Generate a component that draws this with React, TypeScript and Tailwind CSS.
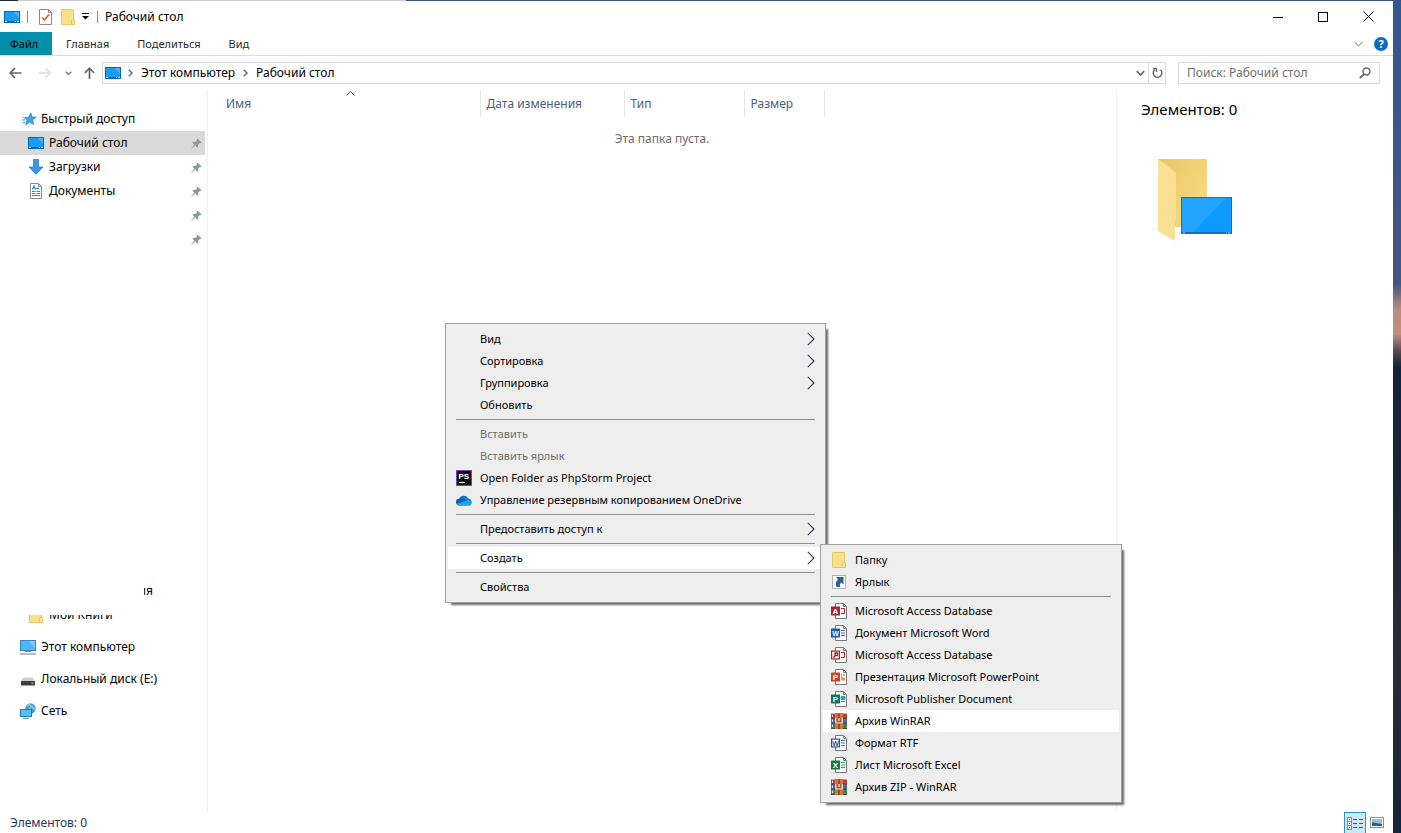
import type { ReactNode } from "react";
import clsx from "clsx";

type MenuEntry =
  | { type: "separator" }
  | {
      type: "item";
      label: string;
      icon?: ReactNode;
      submenu?: boolean;
      disabled?: boolean;
      active?: boolean;
    };

const DesktopIcon = () => (
  <svg width="16" height="12" viewBox="0 0 16 12" className="shrink-0" shapeRendering="crispEdges">
    <rect width="16" height="12" fill="#0b67ad" />
    <rect x="1" y="1" width="14" height="9" fill="#1a9df5" />
    <path d="M9 1h6v5z" fill="#45b4fb" />
    <path d="M1 10h2v1H1zM11 10h1v1h-1zM13 10h2v1h-2z" fill="#cfeaff" />
  </svg>
);

const FolderIcon = ({ className }: { className?: string }) => (
  <svg width="14" height="16" viewBox="0 0 14 16" className={clsx("shrink-0", className)}>
    <path d="M.5.5h12v10l1 .5v4.500H.5z" fill="#fbe08b" stroke="#e8c664" />
    <path d="M10.500 15.500v-4l1.500-1.500 1.500 1v4.500z" fill="#ffe9a3" stroke="#e3bd4f" strokeWidth=".8" />
  </svg>
);

const PropertiesIcon = () => (
  <svg width="13" height="16" viewBox="0 0 13 16" className="shrink-0" fill="none">
    <path d="M.5.5h9l3 3v12H.5z" fill="#fff" stroke="#8b8b8b" />
    <path d="M9.500.5v3h3" stroke="#8b8b8b" />
    <path d="M3 8.500 5.500 11 10 5.500" stroke="#dc6236" strokeWidth="1.700" />
  </svg>
);

const StarIcon = () => (
  <svg width="15" height="14" viewBox="0 0 15 14" className="shrink-0">
    <path
      d="M8.800.8l1.100 4 4.300.4-3.500 2.600.9 4.700-3.900-2.400-4.200 2.700L5 8.400 2.600 6l3.900-.8z"
      fill="#35a7ef"
      stroke="#1e7fc4"
      strokeWidth=".7"
    />
    <path d="M1 5.500h3M0 8h3M1 10.500h2" stroke="#4bafe9" />
  </svg>
);

const DownloadIcon = () => (
  <svg width="16" height="16" viewBox="0 0 16 16" className="shrink-0">
    <path d="M5.500.5h5v7.500h4.500L8 15.400 1 8h4.500z" fill="#3f96e0" stroke="#2d7dc6" strokeWidth=".8" />
  </svg>
);

const DocumentIcon = () => (
  <svg width="12" height="16" viewBox="0 0 12 16" className="shrink-0" fill="none">
    <path d="M.5.5h8l3 3v12H.5z" fill="#fff" stroke="#8a8a8a" />
    <path d="M8.500.5v3h3" stroke="#8a8a8a" />
    <path
      d="M2.500 6.500 4 3l1.500 3.500M6 5.500h3M2 8.500h3.500M6.500 8.500H10M2 10.500h3.500M6.500 10.500H10M2 12.500h8"
      stroke="#2f86c8"
      strokeWidth="1.200"
    />
  </svg>
);

const ComputerIcon = () => (
  <svg width="16" height="15" viewBox="0 0 16 15" className="shrink-0">
    <rect x=".5" y=".5" width="15" height="10" fill="#4cb8f6" stroke="#3a87b5" />
    <path d="M9 1h6v7z" fill="#77cbfa" />
    <path d="M5 11.500h6" stroke="#5f8ea8" />
    <path d="M0 14h16" stroke="#8eacbf" strokeWidth="1.500" />
  </svg>
);

const DriveIcon = () => (
  <svg width="14" height="9" viewBox="0 0 14 9" className="mt-1 shrink-0">
    <path d="M2.500.5h9L14 4H0z" fill="#cfcfcf" />
    <rect y="4" width="14" height="4.500" rx=".6" fill="#3e3e3e" />
    <rect x="10.500" y="5.500" width="2" height="1.300" fill="#55e07c" />
  </svg>
);

const NetworkIcon = () => (
  <svg width="16" height="16" viewBox="0 0 16 16" className="shrink-0">
    <circle cx="10.500" cy="5.500" r="5.200" fill="#4b9fcb" />
    <path d="M7 3c2-2 4-1 4 .5S9 5 9.500 7M13 3c-1 1 0 3 2 3" stroke="#9bd0e8" strokeWidth="1.300" fill="none" />
    <rect x=".5" y="6.500" width="11" height="7" fill="#58bdf8" stroke="#2a79ad" />
    <path d="M3 15.300h6" stroke="#3c87b4" />
  </svg>
);

const PinIcon = () => (
  <svg width="11" height="11" viewBox="0 0 11 11" className="shrink-0">
    <path d="M6.500.5 10.500 4.500 9.300 5.200 8.800 5 7 6.800 7 8.900 6.200 9.500 4 7.300.8 10.500.3 10.200 3.300 6.600 1.400 4.700 2.100 4 4.200 4 6 2.200 5.800 1.400z" fill="#8c969e" />
  </svg>
);

const ChevronRight = () => (
  <svg width="8" height="14" viewBox="0 0 8 14" fill="none" className="shrink-0">
    <path d="M.8.8 7 7 .8 13.200" stroke="#33334a" strokeWidth="1.100" />
  </svg>
);

const CrumbChevron = () => (
  <svg width="5" height="8" viewBox="0 0 5 8" fill="none" className="shrink-0">
    <path d="M.8.8 4 4 .8 7.200" stroke="#666" strokeWidth="1.400" />
  </svg>
);

const PhpStormIcon = () => (
  <svg width="16" height="16" viewBox="0 0 16 16">
    <rect width="16" height="16" fill="#7a3fb0" />
    <rect x="1" y="1" width="14" height="14" fill="#120c1a" />
    <text x="2.500" y="8.500" fontSize="8" fontWeight="700" fontFamily="Liberation Sans, sans-serif" fill="#fff">
      PS
    </text>
    <path d="M3 12.500h6" stroke="#fff" strokeWidth="1.200" />
  </svg>
);

const OneDriveIcon = () => (
  <svg width="16" height="11" viewBox="0 0 16 11">
    <path d="M3.500 10.500A3.400 3.400 0 0 1 3.200 3.600 5 5 0 0 1 12 3.200L13 7z" fill="#0c64b6" />
    <path d="M5 3.600c2-.3 3.500.8 5 1.800L13 8 15.500 6.200A3.600 3.600 0 0 0 12 3.400 5 5 0 0 0 5 3.600z" fill="#1583d8" />
    <path d="M.9 8.800A3.500 3.500 0 0 0 3.700 10.800H12.600A3.300 3.300 0 0 0 15.500 6L12.500 4.800 7.500 6.500z" fill="#28a0e8" />
  </svg>
);

const ShortcutIcon = () => (
  <svg width="14" height="14" viewBox="0 0 14 14">
    <rect x=".5" y=".5" width="13" height="13" fill="#fff" stroke="#a9b3bd" />
    <path d="M4 2h7.500v7.500L9.500 7.500c-1.800 1-2 2.200-1.200 4.500H4.500C3 9 3.800 6.500 6 4.500z" fill="#2f5b97" />
  </svg>
);

const OfficeIcon = ({
  letter,
  color,
  outlined,
  children,
}: {
  letter?: string;
  color: string;
  outlined?: boolean;
  children?: ReactNode;
}) => (
  <svg width="16" height="16" viewBox="0 0 16 16" fill="none">
    <path d="M4.500.5h8l3 3v12h-11z" fill="#fff" stroke="#777" />
    <path d="M12.500.5v3h3" stroke="#777" />
    {children}
    <rect
      x={outlined ? 0.6 : 0}
      y={outlined ? 4.1 : 3.5}
      width={outlined ? 7.8 : 9}
      height={outlined ? 7.8 : 9}
      fill={outlined ? "#fff" : color}
      stroke={outlined ? color : "none"}
      strokeWidth="1.200"
    />
    {letter ? (
      <text
        x="4.500"
        y="10.700"
        fontSize={letter === "W" ? 7 : 8}
        fontWeight="700"
        textAnchor="middle"
        fontFamily="Liberation Sans, sans-serif"
        fill={outlined ? color : "#fff"}
      >
        {letter}
      </text>
    ) : (
      <path d="M2.300 10.500 4.300 8.500M4 6h2.500v2.500H4z" stroke={color} strokeWidth="1.400" />
    )}
  </svg>
);

const WinRarIcon = () => (
  <svg width="16" height="16" viewBox="0 0 16 16">
    <rect y=".5" width="16" height="5" fill="#c23a42" />
    <rect y="5.500" width="16" height="5" fill="#5560b0" />
    <rect y="10.500" width="16" height="5" fill="#2f8a44" />
    <path d="M0 5.300h16M0 10.300h16M0 15.500h16" stroke="#3b2340" strokeWidth=".8" />
    <path d="M1.500 1.500v2.500M1.500 6.500V9M1.500 11.500V14" stroke="#f3d7dc" />
    <path d="M4 0h3.500v16H4zM8.500 0H12v16H8.500z" fill="#d0792f" />
    <path d="M7.500 0h1v16h-1z" fill="#6e3a1c" />
    <rect x="4" y="5" width="8" height="6" fill="#b3541f" />
    <path d="M4.800 5v5h6.400V5M8 5v3" stroke="#f6efe6" strokeWidth="1.200" fill="none" />
  </svg>
);

const TableLines = ({ color }: { color: string }) => (
  <path d="M10 5.500h3.500v5H10" stroke={color} />
);

const TextLines = ({ color }: { color: string }) => (
  <path d="M10 5.500h4M10 8h4M10 10.500h4" stroke={color} strokeWidth="1.200" />
);

const contextMenu: MenuEntry[] = [
  { type: "item", label: "Вид", submenu: true },
  { type: "item", label: "Сортировка", submenu: true },
  { type: "item", label: "Группировка", submenu: true },
  { type: "item", label: "Обновить" },
  { type: "separator" },
  { type: "item", label: "Вставить", disabled: true },
  { type: "item", label: "Вставить ярлык", disabled: true },
  { type: "item", label: "Open Folder as PhpStorm Project", icon: <PhpStormIcon /> },
  { type: "item", label: "Управление резервным копированием OneDrive", icon: <OneDriveIcon /> },
  { type: "separator" },
  { type: "item", label: "Предоставить доступ к", submenu: true },
  { type: "separator" },
  { type: "item", label: "Создать", submenu: true, active: true },
  { type: "separator" },
  { type: "item", label: "Свойства" },
];

const createMenu: MenuEntry[] = [
  { type: "item", label: "Папку", icon: <FolderIcon /> },
  { type: "item", label: "Ярлык", icon: <ShortcutIcon /> },
  { type: "separator" },
  {
    type: "item",
    label: "Microsoft Access Database",
    icon: <OfficeIcon letter="A" color="#a4262f"><TableLines color="#a4262f" /></OfficeIcon>,
  },
  {
    type: "item",
    label: "Документ Microsoft Word",
    icon: <OfficeIcon letter="W" color="#185abd"><TextLines color="#2b7cd3" /></OfficeIcon>,
  },
  {
    type: "item",
    label: "Microsoft Access Database",
    icon: <OfficeIcon outlined color="#a4262f"><TableLines color="#a4262f" /></OfficeIcon>,
  },
  {
    type: "item",
    label: "Презентация Microsoft PowerPoint",
    icon: (
      <OfficeIcon letter="P" color="#c8472b">
        <path d="M10 4.500h1v4h3v3h-4zM12 4.500a2.500 2.500 0 0 1 2 2.500h-2z" fill="#e8906f" />
      </OfficeIcon>
    ),
  },
  {
    type: "item",
    label: "Microsoft Publisher Document",
    icon: (
      <OfficeIcon letter="P" color="#077568">
        <path d="M10 5.500h4v3h-4zM10 10.500h4" fill="#2ba6a8" stroke="#2ba6a8" />
      </OfficeIcon>
    ),
  },
  { type: "item", label: "Архив WinRAR", icon: <WinRarIcon />, active: true },
  {
    type: "item",
    label: "Формат RTF",
    icon: <OfficeIcon outlined letter="W" color="#2b579a"><TextLines color="#2b7cd3" /></OfficeIcon>,
  },
  {
    type: "item",
    label: "Лист Microsoft Excel",
    icon: <OfficeIcon letter="X" color="#107c41"><TextLines color="#21a366" /></OfficeIcon>,
  },
  { type: "item", label: "Архив ZIP - WinRAR", icon: <WinRarIcon /> },
];

const quickAccess = [
  { label: "Рабочий стол", icon: <DesktopIcon />, selected: true },
  { label: "Загрузки", icon: <DownloadIcon /> },
  { label: "Документы", icon: <DocumentIcon /> },
  { label: "" },
  { label: "" },
];

const places = [
  { label: "Этот компьютер", icon: <ComputerIcon /> },
  { label: "Локальный диск (E:)", icon: <DriveIcon /> },
  { label: "Сеть", icon: <NetworkIcon /> },
];

const Menu = ({ entries, label, className }: { entries: MenuEntry[]; label: string; className: string }) => (
  <ul
    role="menu"
    aria-label={label}
    className={clsx(
      "absolute border border-[#a0a0a0] bg-[#eeeeee] px-[2px] py-1 text-[11px] shadow-[4px_4px_2px_-2px_rgba(0,0,0,0.6)]",
      className
    )}
  >
    {entries.map((entry, i) =>
      entry.type === "separator" ? (
        <li key={i} role="separator" className="flex h-[7px] items-center px-2">
          <span className="h-px w-full bg-[#919191]" />
        </li>
      ) : (
        <li key={i} role="none">
          <button
            role="menuitem"
            disabled={entry.disabled}
            className={clsx(
              "flex h-[22px] w-full items-center px-2 text-left",
              entry.active && "bg-white",
              entry.disabled ? "text-[#6d6d6d]" : "text-black"
            )}
          >
            <span className="flex w-6 shrink-0">
              <span className="flex w-4 justify-center">{entry.icon}</span>
            </span>
            <span className="flex-1 whitespace-nowrap">{entry.label}</span>
            {entry.submenu && <ChevronRight />}
          </button>
        </li>
      )
    )}
  </ul>
);

const TitleBar = () => (
  <header className="flex h-[31px] items-center pl-1">
    <DesktopIcon />
    <span className="ml-[7px] h-3 w-px bg-[#8c8c8c]" />
    <button aria-label="Свойства" className="ml-[11px]">
      <PropertiesIcon />
    </button>
    <button aria-label="Новая папка" className="ml-[9px]">
      <FolderIcon />
    </button>
    <button aria-label="Настройка панели быстрого доступа" className="ml-[7px]">
      <svg width="7" height="7" viewBox="0 0 7 7">
        <path d="M0 .5h7" stroke="#000" />
        <path d="M0 3h7L3.500 6.500z" />
      </svg>
    </button>
    <span className="ml-2 h-3 w-px bg-[#8c8c8c]" />
    <h1 className="ml-[7px]">Рабочий стол</h1>
    <div className="ml-auto mr-px flex h-full">
      <button aria-label="Свернуть" className="flex w-[45px] items-center justify-center">
        <svg width="10" height="10" viewBox="0 0 10 10" shapeRendering="crispEdges">
          <path d="M0 5.500h10" stroke="#000" />
        </svg>
      </button>
      <button aria-label="Развернуть" className="flex w-[45px] items-center justify-center">
        <svg width="10" height="10" viewBox="0 0 10 10" shapeRendering="crispEdges">
          <path d="M.5.5h9v9h-9z" stroke="#000" fill="none" />
        </svg>
      </button>
      <button aria-label="Закрыть" className="flex w-[47px] items-center justify-center">
        <svg width="11" height="11" viewBox="0 0 11 11">
          <path d="M.5.5l10 10M10.500.5l-10 10" stroke="#000" />
        </svg>
      </button>
    </div>
  </header>
);

const Ribbon = () => (
  <nav className="flex h-6 items-center border-b border-[#dadbdc] text-[11px] text-[#2b2b2b]">
    <button className="h-[23px] w-[52px] bg-[#0090ac] pr-1 text-black">Файл</button>
    <button className="ml-[14px]">Главная</button>
    <button className="ml-7">Поделиться</button>
    <button className="ml-7">Вид</button>
    <button aria-label="Развернуть ленту" className="ml-auto">
      <svg width="9" height="6" viewBox="0 0 9 6" fill="none">
        <path d="M.5.8l4 4 4-4" stroke="#a3a3a3" strokeWidth="1.200" />
      </svg>
    </button>
    <button
      aria-label="Справка"
      className="ml-[11px] mr-[5px] size-[14px] rounded-full bg-[#0f6cbd] text-center text-[11px] leading-[14px] font-bold text-white"
    >
      ?
    </button>
  </nav>
);

const AddressBar = () => (
  <div className="flex h-[34px] items-center">
    <button aria-label="Назад" className="ml-[9px]">
      <svg width="13" height="12" viewBox="0 0 13 12" fill="none">
        <path d="M12.500 6H1.500M6 1.200 1.200 6 6 10.800" stroke="#666" strokeWidth="1.700" />
      </svg>
    </button>
    <button aria-label="Вперед" className="ml-[17px]">
      <svg width="12" height="12" viewBox="0 0 12 12" fill="none">
        <path d="M0 6h11M6.500 1.200 11.200 6l-4.700 4.800" stroke="#dcdcdc" strokeWidth="1.600" />
      </svg>
    </button>
    <button aria-label="Последние расположения" className="ml-[14px]">
      <svg width="7" height="5" viewBox="0 0 7 5" fill="none">
        <path d="M.7.7l2.800 2.800L6.300.7" stroke="#808080" strokeWidth="1.400" />
      </svg>
    </button>
    <button aria-label="Вверх" className="ml-3">
      <svg width="11" height="12" viewBox="0 0 11 12" fill="none">
        <path d="M5.500 12V1.500M.8 6l4.700-4.800L10.200 6" stroke="#666" strokeWidth="1.700" />
      </svg>
    </button>
    <div className="ml-[7px] flex h-[22px] flex-1 items-center border border-[#d9d9d9] pl-[2px]">
      <DesktopIcon />
      <span className="ml-[7px] flex w-[13px] items-center">
        <CrumbChevron />
      </span>
      <a href="#computer">Этот компьютер</a>
      <span className="ml-2 flex w-[13px] items-center">
        <CrumbChevron />
      </span>
      <a href="#desktop">Рабочий стол</a>
      <button aria-label="Предыдущие расположения" className="ml-auto mr-[3px]">
        <svg width="9" height="7" viewBox="0 0 9 7" fill="none">
          <path d="M.8 1.200l3.700 3.800L8.200 1.200" stroke="#666" strokeWidth="1.700" />
        </svg>
      </button>
      <button aria-label="Обновить" className="flex h-full w-[17px] items-center justify-center border-l border-[#d9d9d9]">
        <svg width="11" height="12" viewBox="0 0 11 12" fill="none">
          <path d="M8.500 2.800A4.300 4.300 0 1 1 3 2.500" stroke="#666" strokeWidth="1.500" />
          <path d="M1 1.500h3.500V5" stroke="#666" strokeWidth="1.400" />
        </svg>
      </button>
    </div>
    <label className="ml-3 mr-[13px] flex h-[22px] w-[202px] items-center border border-[#d9d9d9] px-2">
      <input
        type="search"
        aria-label="Поиск"
        placeholder="Поиск: Рабочий стол"
        className="min-w-0 flex-1 bg-transparent outline-none placeholder:text-[#6d6d6d]"
      />
      <svg width="12" height="12" viewBox="0 0 12 12" fill="none">
        <circle cx="7.500" cy="4.500" r="3.500" stroke="#666" strokeWidth="1.400" />
        <path d="M5 7 .8 11.200" stroke="#666" strokeWidth="1.800" />
      </svg>
    </label>
  </div>
);

const Sidebar = () => (
  <aside className="w-[208px] shrink-0 border-r border-[#f0f0f0] pt-[17px]">
    <a href="#quick" className="flex h-6 items-center pl-[22px]">
      <span className="w-[19px]">
        <StarIcon />
      </span>
      Быстрый доступ
    </a>
    <ul>
      {quickAccess.map((item, i) => (
        <li key={i} className={clsx("mr-[2px] flex h-6 items-center pl-7 pr-[3px]", item.selected && "bg-[#d9d9d9]")}>
          <a href="#folder" className="flex flex-1 items-center">
            <span className="flex w-[21px]">
              <span className="flex w-4 justify-center">{item.icon}</span>
            </span>
            {item.label}
          </a>
          <PinIcon />
        </li>
      ))}
    </ul>
    <div className="mt-[328px] flex h-6 items-center pl-36">
      <span className="flex w-[9px] justify-end overflow-hidden">ия</span>
    </div>
    <div className="mt-3 flex h-3 items-end overflow-hidden">
      <a href="#books" className="flex h-6 shrink-0 items-center pl-[29px]">
        <FolderIcon className="mr-[6px]" />
        Мои Книги
      </a>
    </div>
    <ul className="mt-2 flex flex-col gap-2">
      {places.map((place) => (
        <li key={place.label}>
          <a href="#place" className="flex h-6 items-center pl-5">
            <span className="mr-[5px] flex w-4 justify-center">{place.icon}</span>
            {place.label}
          </a>
        </li>
      ))}
    </ul>
  </aside>
);

const FileList = () => (
  <section className="min-w-0 flex-1 border-r border-[#f0f0f0]">
    <table className="w-full table-fixed">
      <thead>
        <tr className="h-[27px] text-left text-[#4c607a] [&>th]:border-[#e5e5e5] [&>th]:font-normal">
          <th className="relative w-[272px] border-r pl-[18px]">
            Имя
            <svg width="9" height="5" viewBox="0 0 9 5" fill="none" className="absolute left-[138px] top-[1px]">
              <path d="M.5 4.500l4-4 4 4" stroke="#555" />
            </svg>
          </th>
          <th className="w-36 border-r pl-[6px]">Дата изменения</th>
          <th className="w-[120px] border-r pl-[6px]">Тип</th>
          <th className="w-20 border-r pl-[6px]">Размер</th>
          <th aria-label="Прочее" />
        </tr>
      </thead>
      <tbody>
        <tr>
          <td colSpan={5} className="h-11 text-center text-[#6d6d6d]">
            Эта папка пуста.
          </td>
        </tr>
      </tbody>
    </table>
  </section>
);

const PreviewPane = () => (
  <aside className="w-[276px] shrink-0 pl-6 pt-2">
    <h2 className="text-[15px] leading-[22px]">Элементов: 0</h2>
    <svg width="76" height="84" viewBox="0 0 76 84" className="ml-4 mt-[38px]">
      <defs>
        <linearGradient id="back" x1="0" y1="0" x2="1" y2="1">
          <stop offset="0" stopColor="#e9c865" />
          <stop offset="1" stopColor="#f8dc8a" />
        </linearGradient>
        <linearGradient id="front" x1="0" y1="0" x2="1" y2="1">
          <stop offset="0" stopColor="#fbe29a" />
          <stop offset="1" stopColor="#fbdf90" />
        </linearGradient>
      </defs>
      <path d="M1 1h49v68H18z" fill="url(#back)" />
      <path d="M1 1l18 14v44l-1 3v21L1 73z" fill="url(#front)" />
      <rect x="24" y="39" width="51" height="37" fill="#1c6fae" />
      <rect x="25" y="40" width="49" height="34" fill="#0d9bff" />
      <path d="M25 40h44L36 74H25z" fill="#22a4ff" />
      <path d="M26 75h2M69 75h1M71 75h2" stroke="#a8d7f7" />
    </svg>
  </aside>
);

const StatusBar = () => (
  <footer className="flex h-[21px] items-center pl-[10px] pr-[9px] text-[#1e395b]">
    <span>Элементов: 0</span>
    <button aria-label="Таблица" className="ml-auto flex h-full w-[22px] items-center justify-center border border-b-0 border-[#2f93b5] bg-[#cbe8f6]">
      <svg width="16" height="13" viewBox="0 0 16 13" fill="none" shapeRendering="crispEdges">
        <path d="M.5.5h4v4h-4zM.5 4.500h4v4h-4zM.5 8.500h4v4h-4z" fill="#fff" stroke="#8a8a8a" />
        <path d="M2 2.500h1M2 6.500h1M2 10.500h1M6 2.500h4M12 2.500h4M6 6.500h4M12 6.500h4M6 10.500h4M12 10.500h4" stroke="#555" />
      </svg>
    </button>
    <button aria-label="Крупные значки" className="ml-1">
      <svg width="14" height="11" viewBox="0 0 14 11">
        <rect x=".5" y=".5" width="13" height="10" fill="#fff" stroke="#8f8f8f" />
        <rect x="2" y="2" width="10" height="7" fill="#8ec0ea" />
        <path d="M2 5l4 1 6 1v2H2z" fill="#28618c" />
      </svg>
    </button>
  </footer>
);

export default function App() {
  return (
    <div className="relative flex min-h-screen flex-col overflow-hidden bg-white font-['Noto_Sans','Open_Sans',sans-serif] text-[12px] leading-4 text-black">
      <div className="flex h-px">
        <span className="w-[18px] bg-[#1d2c44]" />
        <span className="w-[388px] bg-[#c9cbd0]" />
        <span className="flex-1 bg-[#3a5078]" />
      </div>
      <div className="flex flex-1">
        <div className="flex min-w-0 flex-1 flex-col">
          <TitleBar />
          <Ribbon />
          <AddressBar />
          <main className="flex flex-1">
            <Sidebar />
            <FileList />
            <PreviewPane />
          </main>
          <StatusBar />
        </div>
        <div className="w-2 shrink-0 bg-linear-[180deg,#34578c_0%,#3d5687_22%,#45557f_34%,#b98b80_37%,#c0907c_40%,#5a4a56_42%,#13233a_44%,#1b2838_60%,#2a2c38_78%,#15263b_100%]" />
      </div>
      <Menu entries={contextMenu} label="Контекстное меню" className="left-[445px] top-[323px] w-[381px]" />
      <Menu entries={createMenu} label="Создать" className="left-[820px] top-[544px] w-[302px]" />
    </div>
  );
}
